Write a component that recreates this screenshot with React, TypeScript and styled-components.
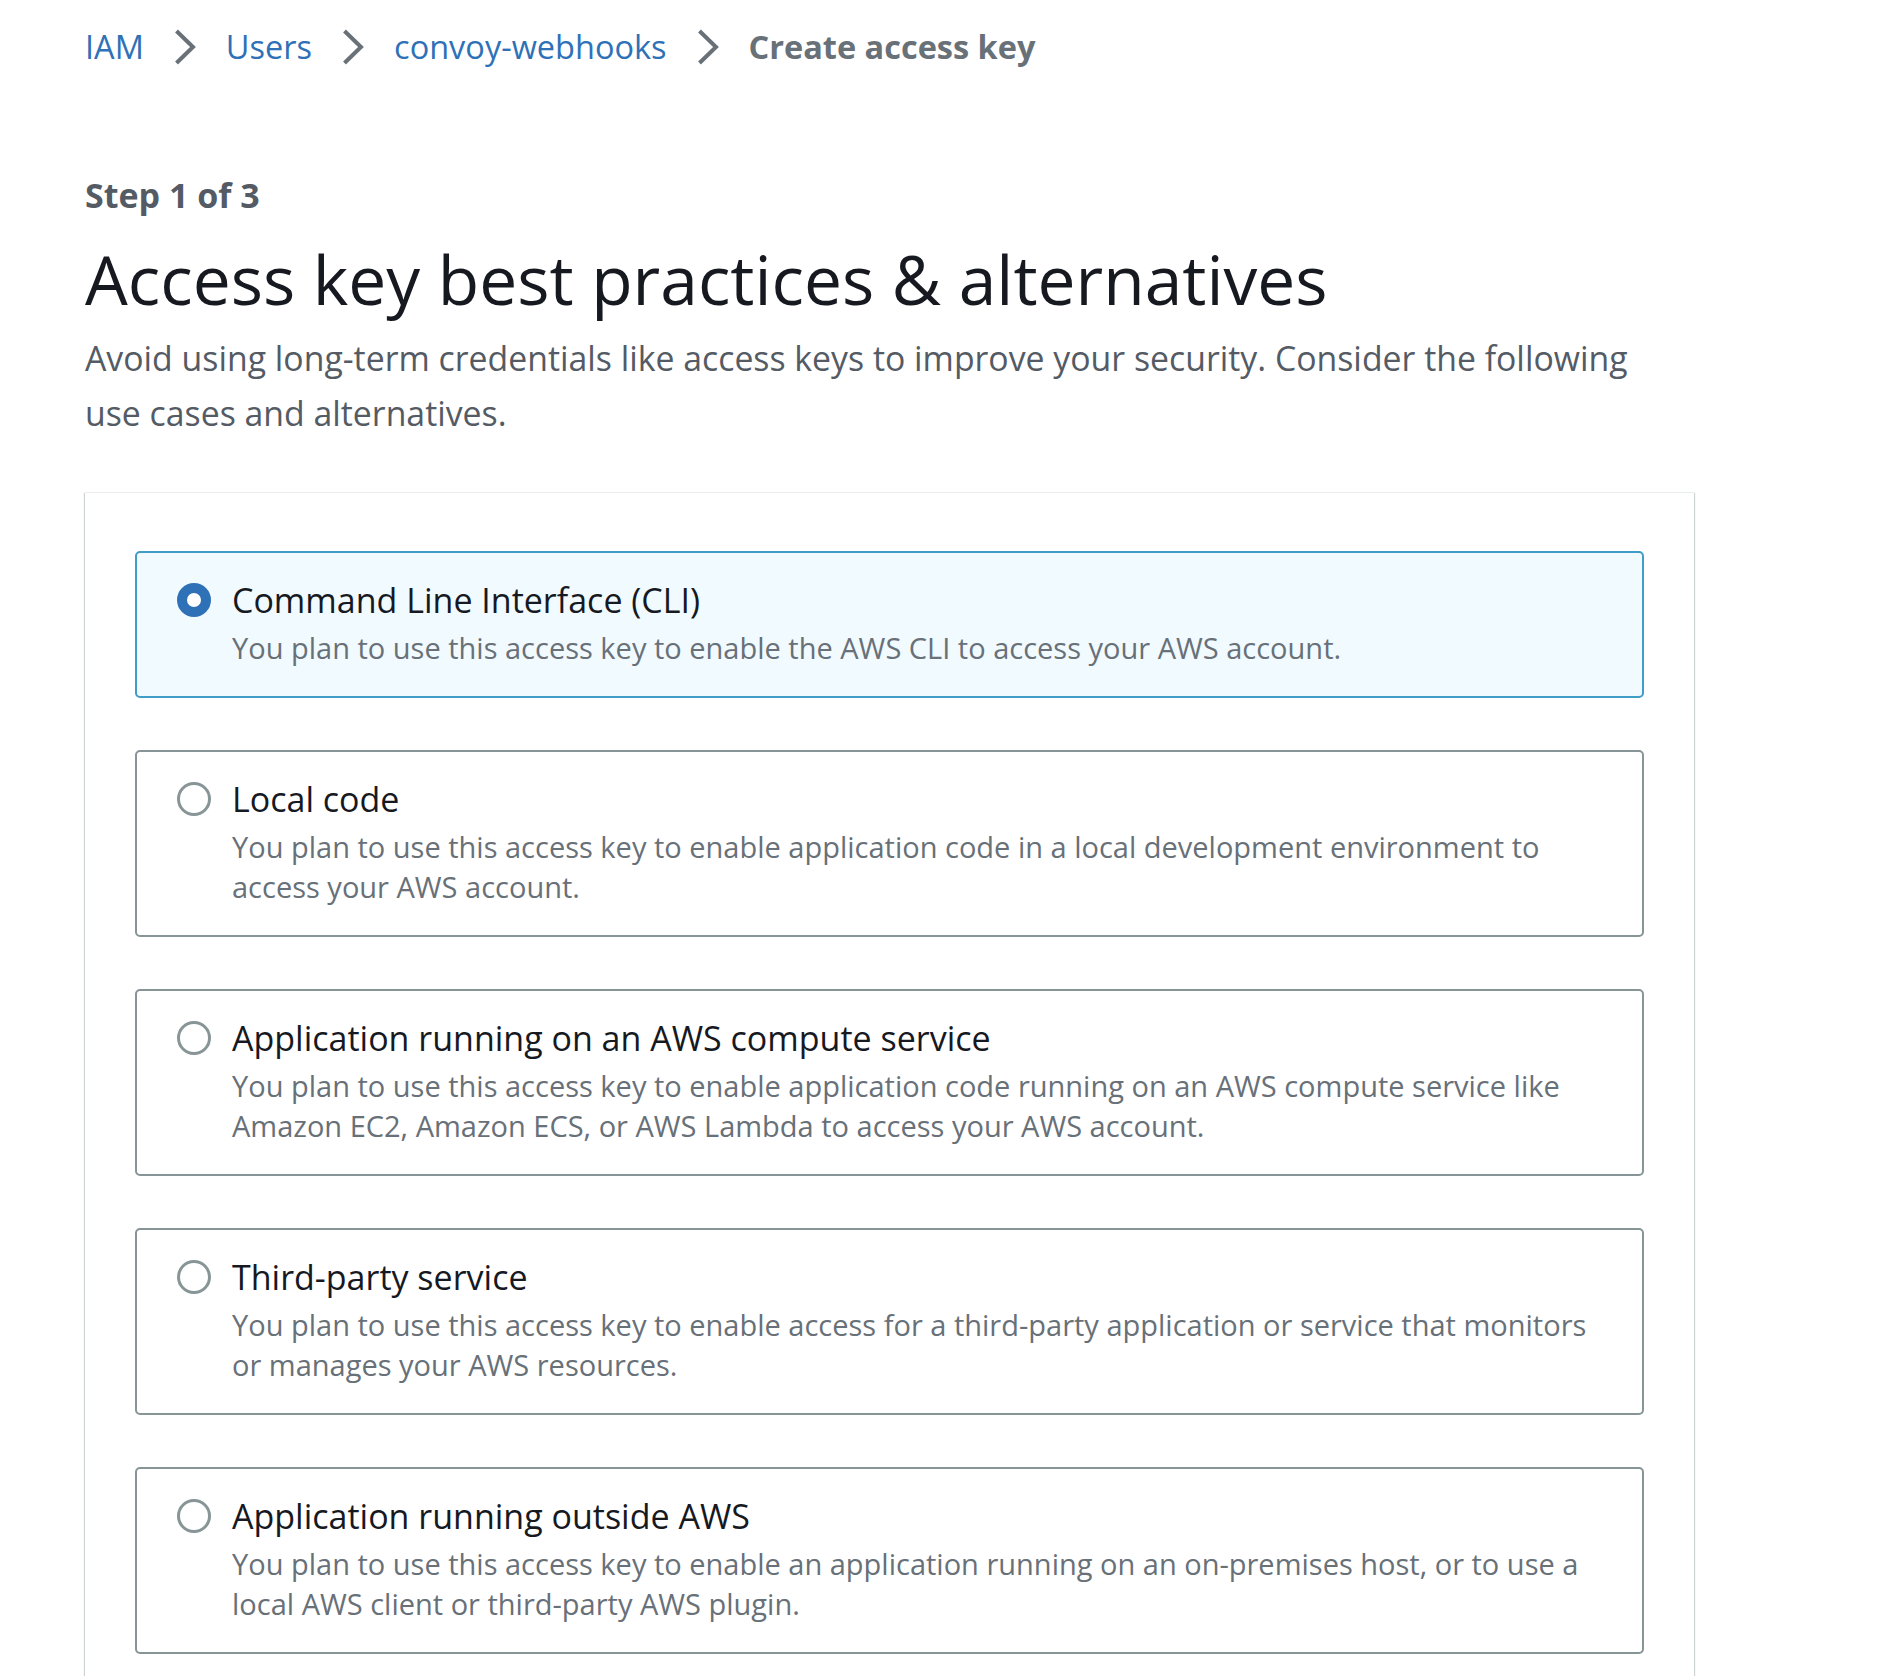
import React, { useState } from "react"
import styled, { createGlobalStyle } from "styled-components"

const GlobalStyle = createGlobalStyle`
  html, body {
    margin: 0;
    padding: 0;
    background: #ffffff;
  }
  body {
    font-family: "Open Sans", "Noto Sans", "Liberation Sans", sans-serif;
    color: #16191f;
  }
`

type Option = {
  id: string
  title: string
  description: string
}

const options: Option[] = [
  {
    id: "cli",
    title: "Command Line Interface (CLI)",
    description: "You plan to use this access key to enable the AWS CLI to access your AWS account.",
  },
  {
    id: "local",
    title: "Local code",
    description:
      "You plan to use this access key to enable application code in a local development environment to access your AWS account.",
  },
  {
    id: "compute",
    title: "Application running on an AWS compute service",
    description:
      "You plan to use this access key to enable application code running on an AWS compute service like Amazon EC2, Amazon ECS, or AWS Lambda to access your AWS account.",
  },
  {
    id: "third-party",
    title: "Third-party service",
    description:
      "You plan to use this access key to enable access for a third-party application or service that monitors or manages your AWS resources.",
  },
  {
    id: "outside",
    title: "Application running outside AWS",
    description:
      "You plan to use this access key to enable an application running on an on-premises host, or to use a local AWS client or third-party AWS plugin.",
  },
]

const crumbs = ["IAM", "Users", "convoy-webhooks"]

const Chevron = () => (
  <svg width="22" height="36" viewBox="0 0 22 36" fill="none">
    <path d="M2.5 2 L19 18 L2.5 34" stroke="#687078" strokeWidth="4" />
  </svg>
)

const App = () => {
  const [selected, setSelected] = useState("cli")

  return (
    <Page>
      <GlobalStyle />
      <Breadcrumbs>
        {crumbs.map((c) => (
          <React.Fragment key={c}>
            <CrumbLink href="#">{c}</CrumbLink>
            <Chevron />
          </React.Fragment>
        ))}
        <CrumbCurrent>Create access key</CrumbCurrent>
      </Breadcrumbs>

      <Step>Step 1 of 3</Step>
      <Heading>Access key best practices &amp; alternatives</Heading>
      <Lead>
        Avoid using long-term credentials like access keys to improve your security. Consider the following use
        cases and alternatives.
      </Lead>

      <Panel>
        <TileList>
          {options.map((o) => (
            <Tile key={o.id} $selected={selected === o.id} onClick={() => setSelected(o.id)}>
              <Radio $selected={selected === o.id} />
              <TileText>
                <TileTitle>{o.title}</TileTitle>
                <TileDescription>{o.description}</TileDescription>
              </TileText>
            </Tile>
          ))}
        </TileList>
      </Panel>
    </Page>
  )
}

export default App

const Page = styled.div`
  height: 1676px;
  overflow: hidden;
  box-sizing: border-box;
  padding: 23px 0 0 85px;
  width: 1890px;
`

const Breadcrumbs = styled.nav`
  display: flex;
  align-items: center;
  gap: 30px;
  height: 48px;
  font-size: 32.5px;
  line-height: 48px;

  svg {
    flex-shrink: 0;
  }
`

const CrumbLink = styled.a`
  color: #2f71b7;
  text-decoration: none;
`

const CrumbCurrent = styled.span`
  color: #687078;
  font-weight: 700;
`

const Step = styled.div`
  margin-top: 100px;
  font-size: 34px;
  line-height: 48px;
  font-weight: 700;
  color: #545b64;
`

const Heading = styled.h1`
  margin: 20px 0 0;
  font-size: 67.7px;
  line-height: 80px;
  font-weight: 400;
  color: #16191f;
`

const Lead = styled.p`
  margin: 12px 0 0;
  width: 1600px;
  font-size: 33.8px;
  line-height: 55px;
  color: #545b64;
`

const Panel = styled.section`
  margin-top: 51px;
  width: 1609px;
  box-sizing: border-box;
  padding: 58px 50px 60px;
  background: #ffffff;
  border-top: 1px solid #eaeded;
  box-shadow: 0 1px 1px 0 rgba(0, 28, 36, 0.3), 1px 1px 1px 0 rgba(0, 28, 36, 0.15),
    -1px 1px 1px 0 rgba(0, 28, 36, 0.15);
`

const TileList = styled.div`
  display: flex;
  flex-direction: column;
  gap: 52px;
`

const Tile = styled.label<{ $selected: boolean }>`
  display: flex;
  align-items: flex-start;
  gap: 21px;
  padding: 25px 28px 28px 40px;
  border: 2px solid ${(p) => (p.$selected ? "#3f9dc8" : "#879596")};
  border-radius: 5px;
  background: ${(p) => (p.$selected ? "#f1faff" : "#ffffff")};
  cursor: pointer;
`

const Radio = styled.span<{ $selected: boolean }>`
  flex-shrink: 0;
  width: 34px;
  height: 34px;
  margin-top: 5px;
  box-sizing: border-box;
  border-radius: 50%;
  border: ${(p) => (p.$selected ? "10px solid #2f71b7" : "3px solid #879596")};
  background: #ffffff;
`

const TileText = styled.div`
  display: flex;
  flex-direction: column;
  gap: 6px;
  min-width: 0;
`

const TileTitle = styled.div`
  font-size: 34px;
  line-height: 44px;
  color: #16191f;
`

const TileDescription = styled.div`
  font-size: 29px;
  line-height: 40px;
  color: #687078;
`
